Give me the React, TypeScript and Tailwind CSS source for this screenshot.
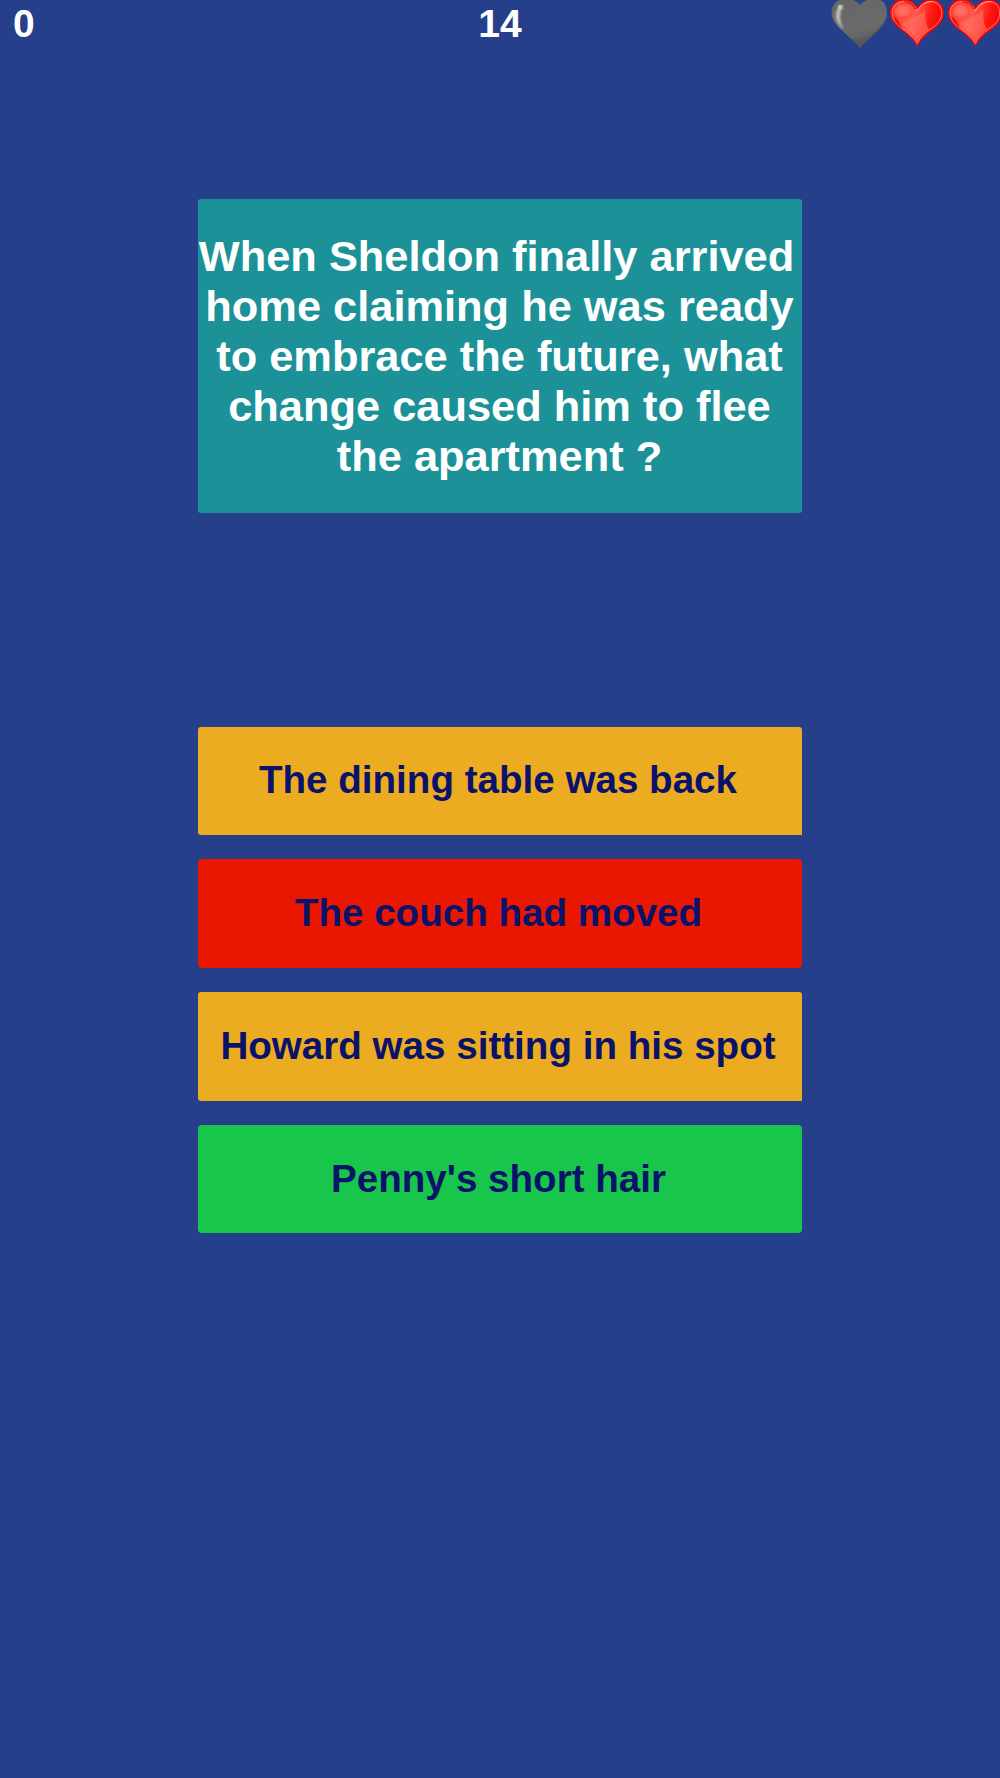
import { clsx } from 'clsx';

type AnswerState = 'idle' | 'wrong' | 'right';

const question = [
  'When Sheldon finally arrived',
  'home claiming he was ready',
  'to embrace the future, what',
  'change caused him to flee',
  'the apartment ?',
];

const answers: { text: string; state: AnswerState }[] = [
  { text: 'The dining table was back', state: 'idle' },
  { text: 'The couch had moved', state: 'wrong' },
  { text: 'Howard was sitting in his spot', state: 'idle' },
  { text: "Penny's short hair", state: 'right' },
];

const stateColors: Record<AnswerState, string> = {
  idle: 'bg-[#ebac22] rounded-[3px] rounded-br-none pr-[4px]',
  wrong: 'bg-[#e91700] rounded-[4px] pr-[3px]',
  right: 'bg-[#17c64b] rounded-[4px] pr-[3px]',
};

export default function App() {
  return (
    <div className="flex h-[1778px] w-[1000px] flex-col items-center overflow-hidden bg-[#263f8a] font-['Liberation_Sans',Arial,sans-serif] font-bold">
      {/* Score, timer, lives */}
      <header className="grid h-[48px] w-full grid-cols-3 text-[39px] leading-[48px] text-white">
        <span className="pl-[13px]">0</span>
        <span className="text-center">14</span>
        <div className="-mr-[4px] flex justify-end">
          <LostHeart />
          <Heart />
          <Heart />
        </div>
      </header>

      <section className="mt-[151px] flex h-[314px] w-[604px] flex-col justify-center rounded-[3px] bg-[#1c9298] text-center text-[43.4px] leading-[50px] whitespace-nowrap text-white">
        {question.map((line, i) => (
          <p key={line} className={clsx(i === 0 ? 'pr-[7px]' : 'pr-[1px]')}>
            {line}
          </p>
        ))}
      </section>

      <div className="mt-[213.5px] flex w-[604px] flex-col gap-[24.3px]">
        {answers.map((a) => (
          <button
            key={a.text}
            className={clsx('h-[108.5px] pb-[1px] text-center text-[38.6px] whitespace-nowrap text-[#0a1369]', stateColors[a.state])}
          >
            {a.text}
          </button>
        ))}
      </div>
    </div>
  );
}

function Heart() {
  return (
    <svg className="h-[48px] w-[58px] shrink-0" viewBox="0 0 174 144">
      <defs>
        <linearGradient id="red" x1="0" y1="0.2" x2="1" y2="0.45">
          <stop offset="0" stopColor="#ff3a30" />
          <stop offset="0.45" stopColor="#ff5a4e" />
          <stop offset="0.75" stopColor="#ff1c12" />
          <stop offset="1" stopColor="#f80000" />
        </linearGradient>
        <radialGradient id="shine">
          <stop offset="0" stopColor="#ff7468" />
          <stop offset="0.6" stopColor="#ff6a5e" stopOpacity="0.8" />
          <stop offset="1" stopColor="#ff4036" stopOpacity="0" />
        </radialGradient>
      </defs>
      <path d="M88 140C78 118 55 102 31 83C9 65 3 46 7 28C12 9 28-2 48-2C67-2 81 8 88 22C99 5 115-3 135-1C155 1 167 17 168 36C169 61 153 78 132 92C112 106 96 121 88 140Z" fill="#f80500" />
      <path d="M88 130C77 111 56 96 36 80C16 64 10 47 13 31C17 14 30 4 48 4C67 4 80 15 88 32C98 13 115 3 134 5C151 7 160 20 161 37C162 58 148 73 128 87C109 101 96 112 88 130Z" fill="url(#red)" stroke="#ff8177" strokeWidth="3" />
      <ellipse cx="44" cy="33" rx="31" ry="25" fill="url(#shine)" />
      <path d="M43 70C65 56 92 50 112 27C111 62 116 83 124 86C107 101 95 112 88 124C78 104 57 93 43 70Z" fill="#ff7468" opacity="0.6" />
      <path d="M16 47C19 64 29 75 43 84C35 71 33 61 16 47Z" fill="#df0000" opacity="0.75" />
      <path d="M87 33C98 14 115 3 135 5" fill="none" stroke="#ff9c92" strokeWidth="3" />
      <path d="M83 28C76 15 63 6 49 5" fill="none" stroke="#e81008" strokeWidth="4" />
    </svg>
  );
}

function LostHeart() {
  return (
    <svg className="-mr-[1px] h-[48px] w-[58px] shrink-0" viewBox="0 0 174 144">
      <defs>
        <linearGradient id="grey" x1="0.2" y1="0" x2="0.6" y2="1">
          <stop offset="0" stopColor="#666" />
          <stop offset="0.65" stopColor="#6b6b6b" />
          <stop offset="1" stopColor="#555" />
        </linearGradient>
        <filter id="soft" x="-50%" y="-20%" width="200%" height="140%">
          <feGaussianBlur stdDeviation="2.8" />
        </filter>
      </defs>
      <path d="M87 144C76 126 54 113 32 90C11 70 1 57 2 35C3 13 18-3 42-3C64-3 80 4 87 14C96 3 113-3 134-3C156-3 167 15 168 37C169 59 155 80 134 98C115 115 101 127 87 144Z" fill="url(#grey)" />
      <path d="M57 119C100 118 145 99 166 47C163 68 150 86 134 100C115 117 101 129 87 144C79 132 69 126 57 119Z" fill="#555" opacity="0.5" />
      <path d="M26 20C10 38 12 62 35 86C24 62 24 42 32 20Z" fill="#c0c0c0" stroke="#b4b4b4" strokeWidth="3" filter="url(#soft)" />
      <ellipse cx="28" cy="21" rx="7" ry="6" fill="#dedede" filter="url(#soft)" />
    </svg>
  );
}
